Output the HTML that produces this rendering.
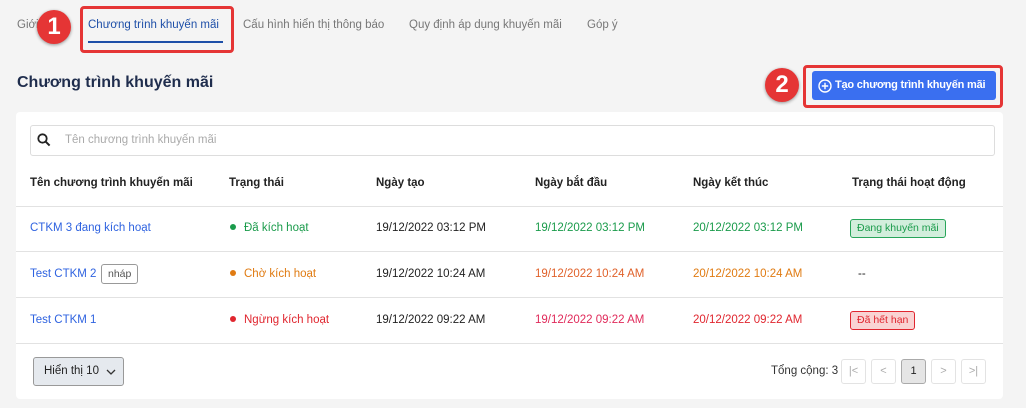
<!DOCTYPE html>
<html><head><meta charset="utf-8"><style>
*{margin:0;padding:0;box-sizing:border-box}
body{width:1026px;height:408px;background:#f4f4f4;font-family:"Liberation Sans",Arial,sans-serif;font-size:11.5px;color:#222;position:relative;overflow:hidden}
.a{position:absolute;white-space:nowrap}
.tab{color:#777;font-size:11.5px;top:19px}
.card{position:absolute;left:16px;top:112px;width:987px;height:287px;background:#fff;border-radius:4px}
.line{position:absolute;left:16px;width:987px;height:1px;background:#e2e2e2}
.th{top:177px;font-weight:bold;color:#222;font-size:11.5px}
.blue{color:#2f63e0}
.g{color:#1a9b4b}.o{color:#e07b12}.r{color:#e0262f}
.dot{display:inline-block;width:6px;height:6px;border-radius:50%;margin-right:8px;vertical-align:1px}
.badge{position:absolute;width:34px;height:34px;border-radius:50%;background:#e53535;color:#fff;font-size:24px;font-weight:bold;text-align:center;line-height:34px;box-shadow:0 1px 3px rgba(0,0,0,.4)}
.pg{position:absolute;top:359px;width:25px;height:25px;border:1px solid #e3e3e3;border-radius:3px;color:#aaa;text-align:center;line-height:23px;font-size:11px}
</style></head><body>
<div class="a tab" style="left:17px">Giới</div>
<div class="badge" style="left:37px;top:10px">1</div>
<div class="a" style="left:80px;top:6px;width:154px;height:47px;border:3px solid #e53535;border-radius:4px"></div>
<div class="a" style="left:88px;top:19px;color:#1e4fa8;font-size:11.5px">Chương trình khuyến mãi</div>
<div class="a" style="left:88px;top:41px;width:135px;height:2px;background:#1e4fa8"></div>
<div class="a tab" style="left:243px">Cấu hình hiển thị thông báo</div>
<div class="a tab" style="left:409px">Quy định áp dụng khuyến mãi</div>
<div class="a tab" style="left:587px">Góp ý</div>
<div class="a" style="left:17px;top:74px;font-size:16px;font-weight:bold;color:#1f2d4d">Chương trình khuyến mãi</div>
<div class="badge" style="left:765px;top:68px">2</div>
<div class="a" style="left:803px;top:65px;width:200px;height:43px;border:3px solid #e53535;border-radius:4px"></div>
<div class="a" style="left:812px;top:71px;width:184px;height:29px;background:#3a6ff0;border-radius:3px;color:#fff;font-weight:bold;line-height:29px;padding-left:23px;font-size:11px;letter-spacing:-0.2px">Tạo chương trình khuyến mãi
<svg style="position:absolute;left:6px;top:8px" width="14" height="14" viewBox="0 0 14 14"><circle cx="7" cy="7" r="6" fill="none" stroke="#fff" stroke-width="1.4"/><path d="M7 3.8v6.4M3.8 7h6.4" stroke="#fff" stroke-width="1.4"/></svg></div>
<div class="card"></div>
<div class="a" style="left:30px;top:125px;width:965px;height:31px;border:1px solid #ddd;border-radius:3px"></div>
<svg class="a" style="left:37px;top:133px" width="14" height="14" viewBox="0 0 14 14"><circle cx="5.5" cy="5.5" r="4.2" fill="none" stroke="#222" stroke-width="1.8"/><path d="M8.6 8.6l4 4" stroke="#222" stroke-width="2"/></svg>
<div class="a" style="left:65px;top:134px;color:#aaa">Tên chương trình khuyến mãi</div>
<div class="a th" style="left:30px">Tên chương trình khuyến mãi</div>
<div class="a th" style="left:229px">Trạng thái</div>
<div class="a th" style="left:376px">Ngày tạo</div>
<div class="a th" style="left:535px">Ngày bắt đầu</div>
<div class="a th" style="left:693px">Ngày kết thúc</div>
<div class="a th" style="left:852px">Trạng thái hoạt động</div>
<div class="line" style="top:206px"></div>
<div class="line" style="top:251px"></div>
<div class="line" style="top:297px"></div>
<div class="line" style="top:343px"></div>
<div class="a blue" style="left:30px;top:222px">CTKM 3 đang kích hoạt</div>
<div class="a g" style="left:230px;top:222px"><span class="dot" style="background:#1a9b4b"></span>Đã kích hoạt</div>
<div class="a" style="left:376px;top:222px">19/12/2022 03:12 PM</div>
<div class="a g" style="left:535px;top:222px">19/12/2022 03:12 PM</div>
<div class="a g" style="left:693px;top:222px">20/12/2022 03:12 PM</div>
<div class="a g" style="left:850px;top:219px;height:19px;border:1px solid #28a55a;background:#d2eedc;border-radius:3px;padding:0 6px;line-height:17px;font-size:10.5px">Đang khuyến mãi</div>
<div class="a blue" style="left:30px;top:268px">Test CTKM 2</div>
<div class="a" style="left:101px;top:264px;height:20px;border:1px solid #999;border-radius:3px;padding:0 6px;line-height:18px;font-size:10.5px;color:#555">nháp</div>
<div class="a o" style="left:230px;top:268px"><span class="dot" style="background:#e07b12"></span>Chờ kích hoạt</div>
<div class="a" style="left:376px;top:268px">19/12/2022 10:24 AM</div>
<div class="a o" style="left:535px;top:268px;color:#e0612a">19/12/2022 10:24 AM</div>
<div class="a o" style="left:693px;top:268px">20/12/2022 10:24 AM</div>
<div class="a" style="left:858px;top:268px">--</div>
<div class="a blue" style="left:30px;top:314px">Test CTKM 1</div>
<div class="a r" style="left:230px;top:314px"><span class="dot" style="background:#e0262f"></span>Ngừng kích hoạt</div>
<div class="a" style="left:376px;top:314px">19/12/2022 09:22 AM</div>
<div class="a r" style="left:535px;top:314px;color:#e02a5a">19/12/2022 09:22 AM</div>
<div class="a r" style="left:693px;top:314px">20/12/2022 09:22 AM</div>
<div class="a r" style="left:850px;top:311px;height:19px;border:1px solid #e0262f;background:#f9d3d3;border-radius:3px;padding:0 6px;line-height:17px;font-size:10.5px">Đã hết hạn</div>
<div class="a" style="left:33px;top:357px;width:91px;height:29px;background:#e5e9ee;border:1px solid #999;border-radius:3px;line-height:27px;padding-left:10px;color:#222">Hiển thị 10
<svg style="position:absolute;left:72px;top:11px" width="10" height="7" viewBox="0 0 10 7"><path d="M1 1l4 4 4-4" fill="none" stroke="#333" stroke-width="1.3"/></svg></div>
<div class="a" style="left:771px;top:365px;color:#333">Tổng cộng: 3</div>
<div class="pg" style="left:841px">|&lt;</div>
<div class="pg" style="left:871px">&lt;</div>
<div class="pg" style="left:901px;background:#e5e5e5;border-color:#aaa;color:#222">1</div>
<div class="pg" style="left:931px">&gt;</div>
<div class="pg" style="left:961px">&gt;|</div>
</body></html>
